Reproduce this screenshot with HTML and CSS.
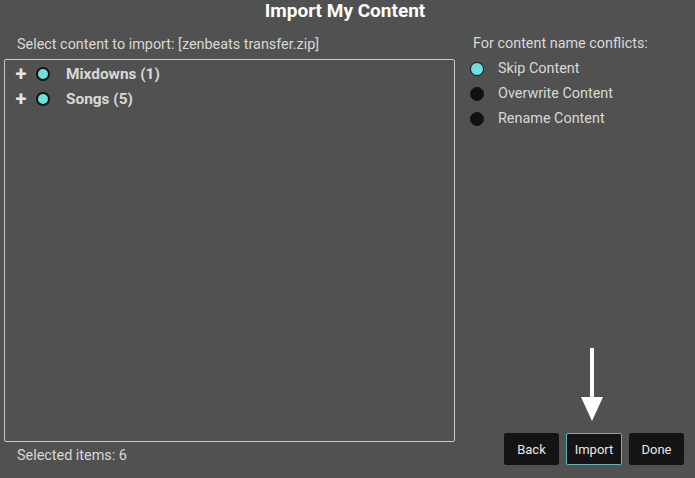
FILE: index.html
```html
<!DOCTYPE html>
<html>
<head>
<meta charset="utf-8">
<link rel="stylesheet" href="styles.css">
</head>
<body>
<div class="page">
  <h1 class="title">Import My Content</h1>
  <div class="main">
    <div class="left">
      <div class="label">Select content to import: [zenbeats transfer.zip]</div>
      <div class="listbox">
        <div class="row"><span class="plus">+</span><span class="dot on"></span><span class="name">Mixdowns (1)</span></div>
        <div class="row"><span class="plus">+</span><span class="dot on"></span><span class="name">Songs (5)</span></div>
      </div>
      <div class="status">Selected items: 6</div>
    </div>
    <div class="right">
      <div class="label">For content name conflicts:</div>
      <div class="opt"><span class="radio on"></span>Skip Content</div>
      <div class="opt"><span class="radio"></span>Overwrite Content</div>
      <div class="opt"><span class="radio"></span>Rename Content</div>
      <div class="spacer"></div>
      <div class="arrowwrap">
        <svg class="arrow" width="24" height="74" viewBox="0 0 24 74">
          <rect x="10" y="0" width="4" height="50" fill="#fff"/>
          <polygon points="1,49 23,49 12,73" fill="#fff"/>
        </svg>
      </div>
      <div class="buttons">
        <button class="btn">Back</button>
        <button class="btn active">Import</button>
        <button class="btn">Done</button>
      </div>
    </div>
  </div>
</div>
</body>
</html>
```
FILE: styles.css
```css
html, body {
  margin: 0;
  padding: 0;
  background: #515151;
}
body {
  font-family: Roboto, "Noto Sans", sans-serif;
  color: #d8d8d8;
}
.page {
  width: 695px;
  height: 478px;
  display: flex;
  flex-direction: column;
}
.title {
  margin: 0;
  height: 23px;
  line-height: 22px;
  text-align: center;
  padding-right: 5px;
  font-size: 19px;
  font-weight: 700;
  color: #fff;
}
.main {
  flex: 1;
  display: flex;
}
.left {
  width: 451px;
  margin-left: 4px;
  display: flex;
  flex-direction: column;
}
.label {
  font-size: 14.4px;
  line-height: 17px;
  margin-top: 13px;
  padding-left: 13px;
  height: 23px;
}
.listbox {
  height: 383px;
  border: 1px solid #c8c8c8;
  border-radius: 2px;
  box-sizing: border-box;
  padding-top: 1px;
}
.row {
  display: flex;
  align-items: center;
  height: 25px;
}
.plus {
  width: 14px;
  margin-left: 9px;
  font-size: 20px;
  font-weight: 700;
  color: #e6e6e6;
  line-height: 20px;
  text-align: center;
}
.dot {
  width: 10px;
  height: 10px;
  margin-left: 8px;
  border-radius: 50%;
  border: 2px solid #111;
  background: #6fe0e0;
}
.name {
  margin-left: 16px;
  font-size: 15.4px;
  font-weight: 700;
  color: #d8d8d8;
}
.status {
  font-size: 14.4px;
  padding-left: 13px;
  margin-top: 5px;
  line-height: 17px;
}
.right {
  flex: 1;
  display: flex;
  flex-direction: column;
  padding-left: 14px;
}
.right .label {
  padding-left: 4px;
  margin-top: 12px;
  height: 21px;
}
.opt {
  display: flex;
  align-items: center;
  height: 25px;
  font-size: 14.4px;
}
.radio {
  width: 12px;
  height: 12px;
  border-radius: 50%;
  background: #111;
  border: 1.5px solid #111;
  margin-right: 14px;
  margin-left: 1px;
}
.radio.on {
  background: #6fe0e0;
}
.spacer {
  flex: 1;
}
.arrowwrap {
  display: flex;
  padding-left: 111px;
  margin-bottom: 11px;
}
.buttons {
  display: flex;
  gap: 7px;
  padding-left: 35px;
  margin-bottom: 13px;
}
.btn {
  width: 55px;
  height: 32px;
  background: #141414;
  color: #e8e8e8;
  border: 1px solid #141414;
  border-radius: 2px;
  font-family: Roboto, "Noto Sans", sans-serif;
  font-size: 13px;
  padding: 0;
}
.btn.active {
  width: 56px;
  border-color: #5fb8b8;
}
```
